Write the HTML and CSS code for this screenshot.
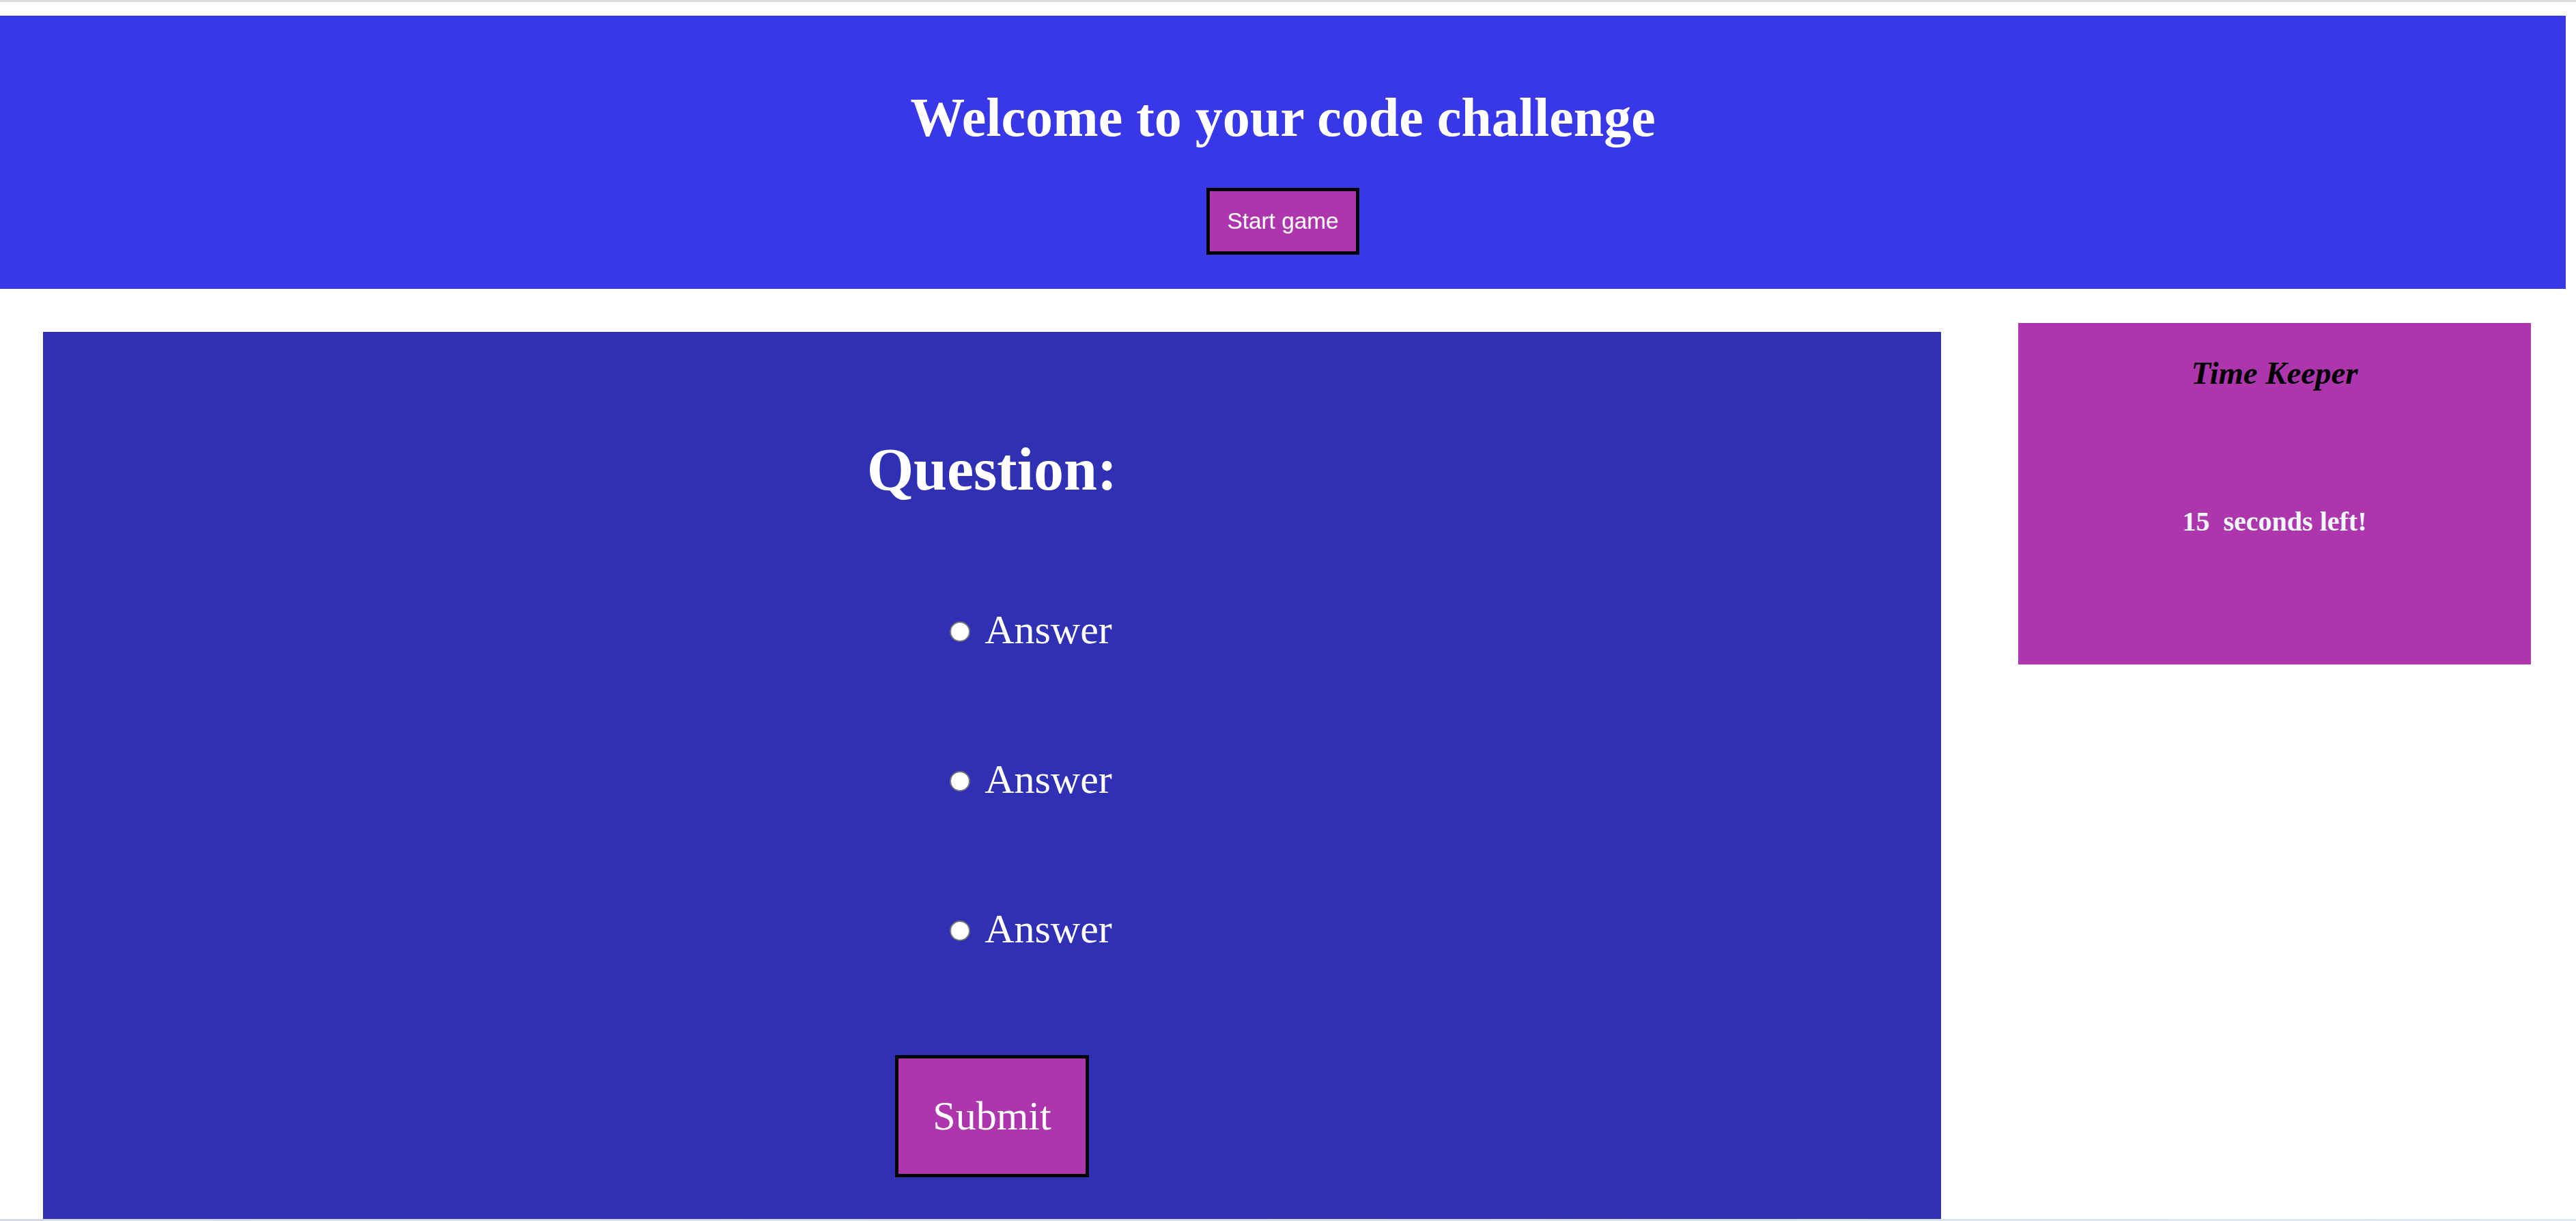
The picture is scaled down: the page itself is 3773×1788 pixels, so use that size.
FILE: index.html
```html
<!DOCTYPE html>
<html lang="en">
<head>
<meta charset="utf-8">
<title>Code Challenge</title>
<link rel="stylesheet" href="styles.css">
</head>
<body>
<div class="topbar"></div>
<header class="hero">
  <h1 class="hero-title">Welcome to your code challenge</h1>
  <div class="hero-actions">
    <button class="start-btn" type="button">Start game</button>
  </div>
</header>
<main class="layout">
  <section class="quiz">
    <h2 class="quiz-question">Question:</h2>
    <label class="answer"><input class="answer-radio" type="radio" name="answer">Answer</label>
    <label class="answer"><input class="answer-radio" type="radio" name="answer">Answer</label>
    <label class="answer"><input class="answer-radio" type="radio" name="answer">Answer</label>
    <button class="submit-btn" type="button">Submit</button>
  </section>
  <aside class="timer">
    <h3 class="timer-title">Time Keeper</h3>
    <p class="timer-count">15&nbsp; seconds left!</p>
  </aside>
</main>
<div class="bottombar"></div>
</body>
</html>
```
FILE: styles.css
```css
html, body {
  margin: 0;
  padding: 0;
  background: #ffffff;
  font-family: "Liberation Serif", "Times New Roman", serif;
}

.topbar {
  height: 3px;
  background: #dadcdf;
  margin-bottom: 20px;
}

.hero {
  width: 3758px;
  background: #3838e9;
  padding: 50px 0;
  text-align: center;
  box-sizing: border-box;
}

.hero-title {
  margin: 53.6px 0 57.5px;
  font-size: 80px;
  font-weight: bold;
  line-height: normal;
  color: #ffffff;
}

.hero-actions {
  display: flex;
  justify-content: center;
}

.start-btn {
  font-family: "Liberation Sans", Arial, sans-serif;
  font-size: 33.33px;
  line-height: normal;
  color: #ffffff;
  background: #ad36ad;
  border: 5px solid #000000;
  padding: 25px;
  margin: 0;
  border-radius: 0;
}

.layout {
  display: flex;
  align-items: flex-start;
  padding-left: 63px;
}

.quiz {
  width: 2780px;
  margin-top: 63px;
  background: #3030b4;
  display: flex;
  flex-direction: column;
  align-items: center;
  gap: 150px;
  padding: 151px 0 150px;
  box-sizing: border-box;
}

.quiz-question {
  margin: 0;
  font-size: 88px;
  font-weight: bold;
  line-height: normal;
  color: #ffffff;
}

.answer {
  display: block;
  margin-left: 114px;
  font-size: 60px;
  line-height: normal;
  color: #ffffff;
}

.answer-radio {
  appearance: none;
  -webkit-appearance: none;
  display: inline-block;
  width: 30px;
  height: 30px;
  margin: 0 21px 2px 0;
  box-sizing: border-box;
  border: 2.5px solid #767676;
  border-radius: 50%;
  background: #ffffff;
  vertical-align: baseline;
}

.submit-btn {
  font-family: "Liberation Serif", "Times New Roman", serif;
  font-size: 60px;
  line-height: normal;
  color: #ffffff;
  background: #ad36ad;
  border: 5px solid #000000;
  padding: 50px;
  margin: 0;
  border-radius: 0;
}

.timer {
  width: 751px;
  height: 500px;
  margin-top: 50px;
  margin-left: 113px;
  background: #ad36ad;
  display: flex;
  flex-direction: column;
  align-items: center;
}

.timer-title {
  margin: 46px 0 0;
  font-size: 46.8px;
  font-weight: bold;
  font-style: italic;
  line-height: normal;
  color: #000000;
}

.timer-count {
  margin: 167px 0 0;
  font-size: 40px;
  font-weight: bold;
  line-height: normal;
  color: #f0f8ff;
}

.bottombar {
  position: fixed;
  left: 0;
  right: 0;
  bottom: 0;
  height: 3px;
  background: linear-gradient(90deg, #d3d9e6 0%, #d8e0ee 60%, #dde9f6 100%);
}
```
